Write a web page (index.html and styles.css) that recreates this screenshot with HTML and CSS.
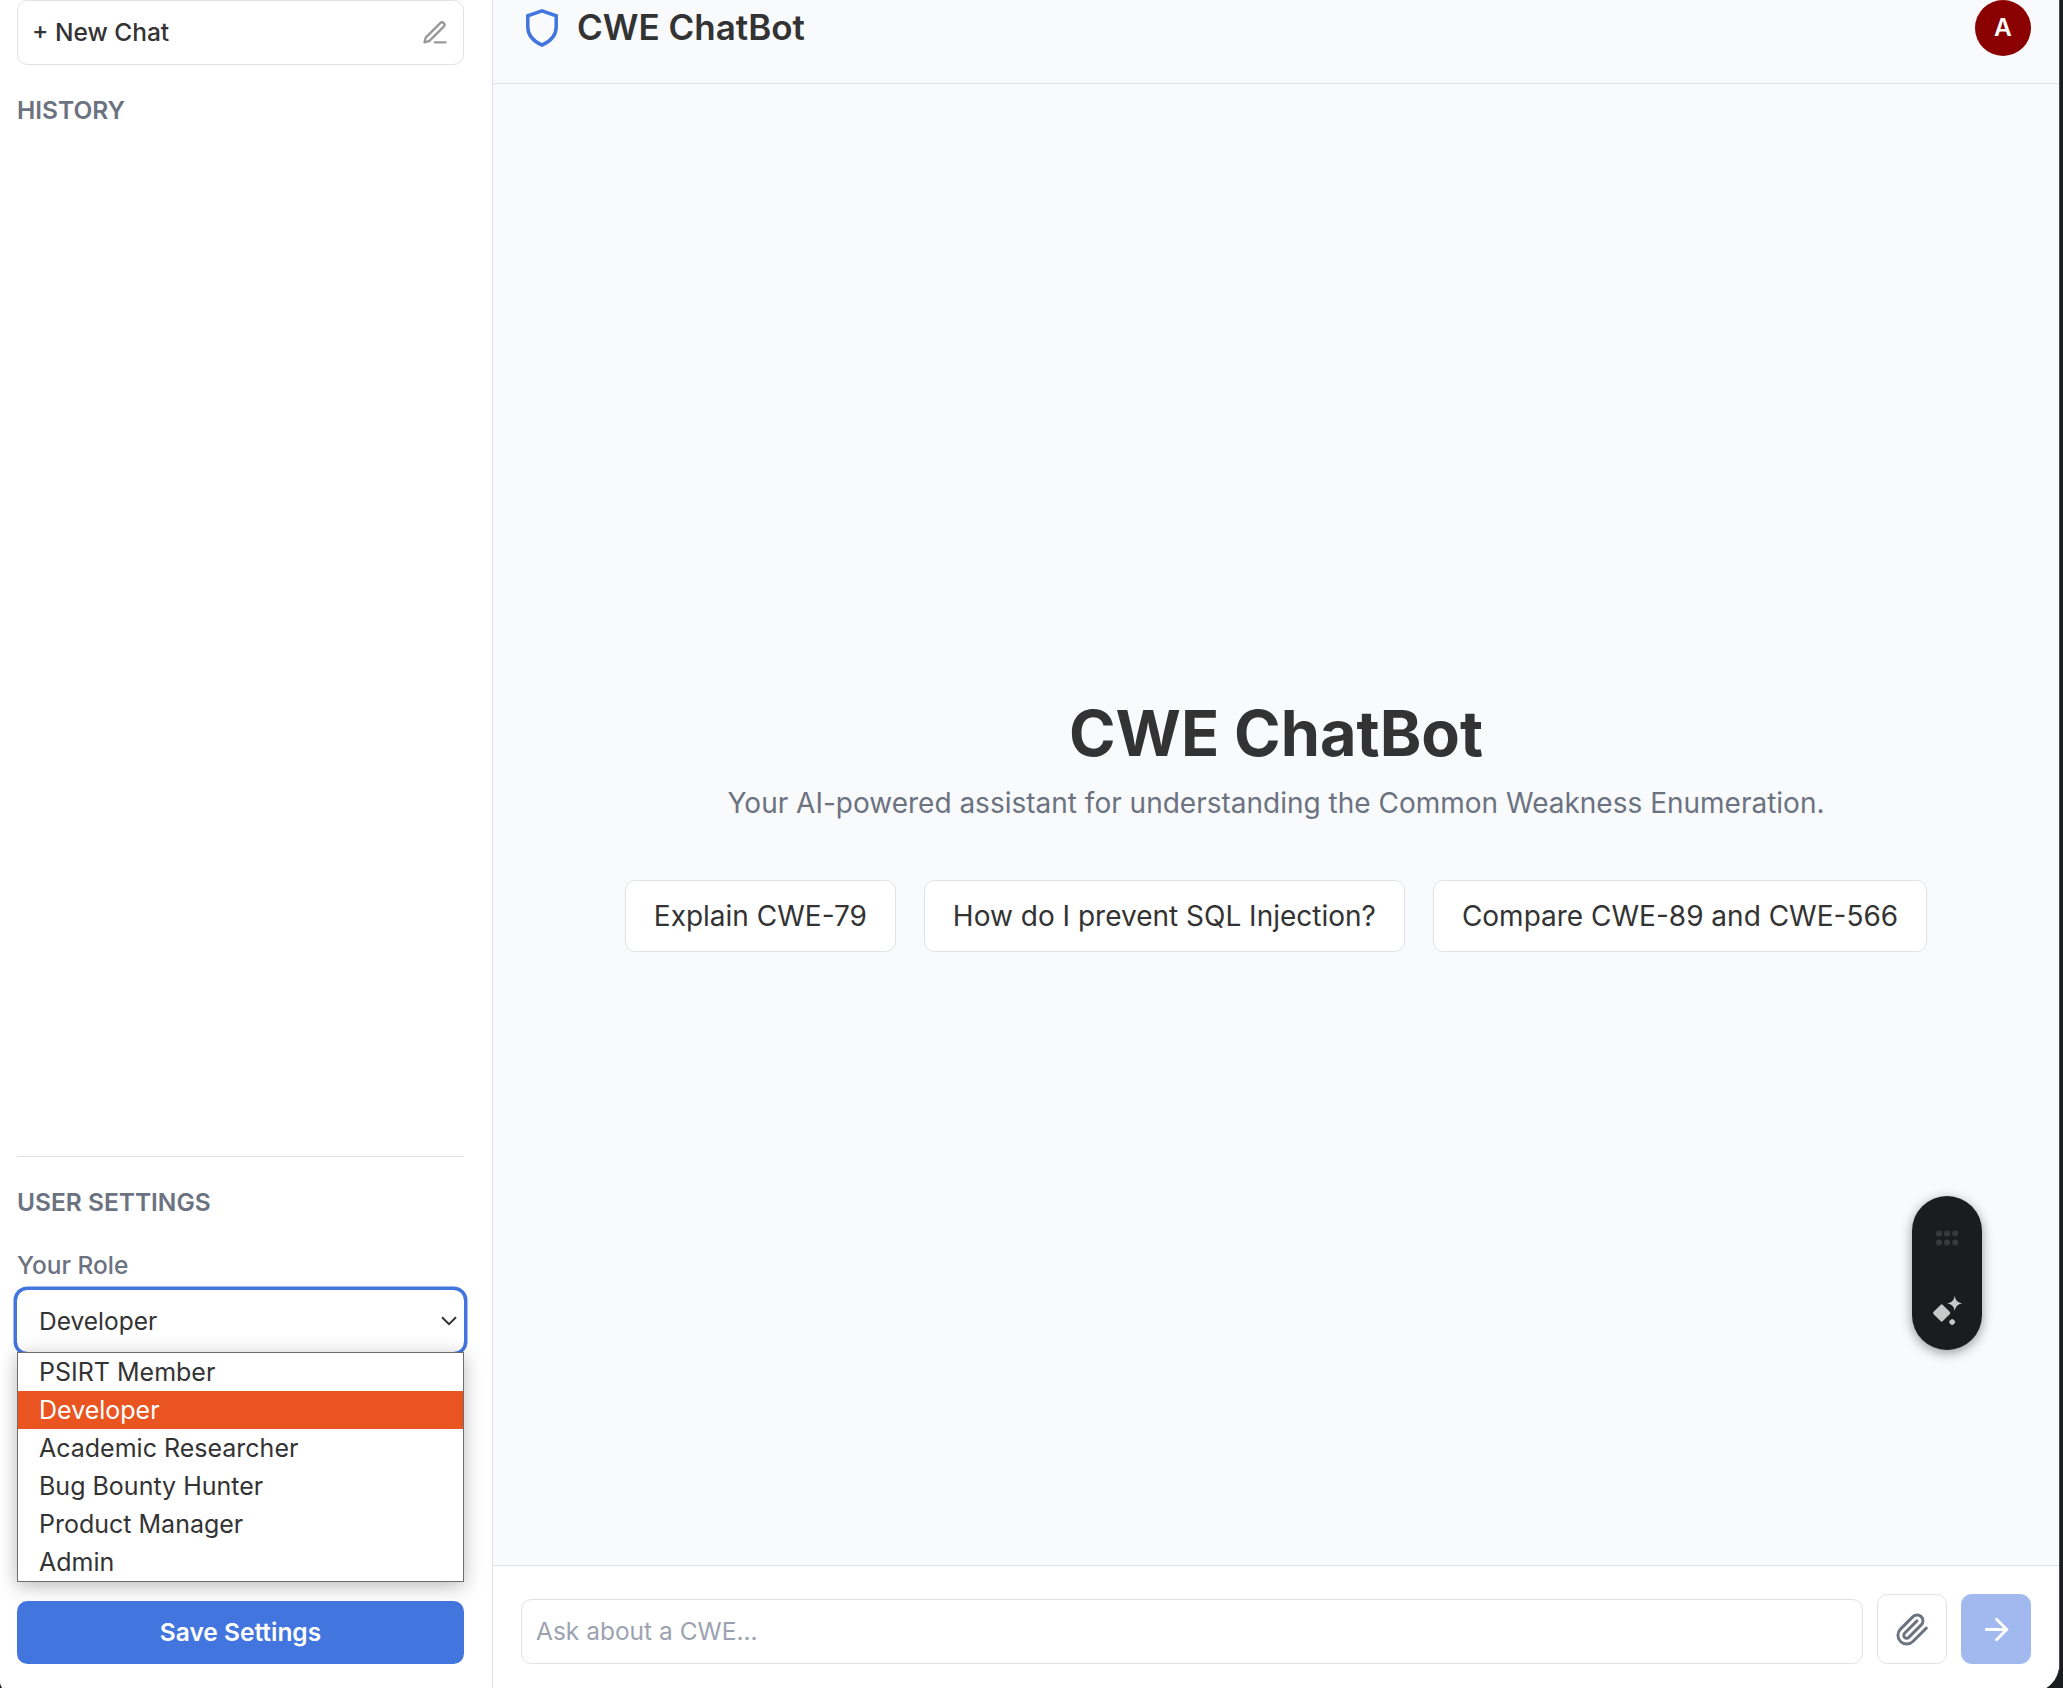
FILE: index.html
```html
<!DOCTYPE html>
<html lang="en">
<head>
<meta charset="utf-8">
<title>CWE ChatBot</title>
<link rel="stylesheet" href="styles.css">
</head>
<body>
<div class="window">
  <aside class="sidebar">
    <button class="new-chat">
      <span>+ New Chat</span>
      <svg class="pencil" viewBox="0 0 24 24" fill="none" stroke="currentColor" stroke-width="2" stroke-linecap="round" stroke-linejoin="round"><path d="M12 20h9"/><path d="M16.5 3.5a2.12 2.12 0 0 1 3 3L7 19l-4 1 1-4Z"/></svg>
    </button>
    <h2 class="label">HISTORY</h2>
    <section class="settings">
      <h2 class="label">USER SETTINGS</h2>
      <div class="field-label">Your Role</div>
      <div class="select">
        <span>Developer</span>
        <svg class="chevron" viewBox="0 0 16 10" fill="none" stroke="currentColor" stroke-width="2"><path d="M1 1.2l7 7 7-7"/></svg>
        <ul class="options">
          <li>PSIRT Member</li>
          <li class="selected">Developer</li>
          <li>Academic Researcher</li>
          <li>Bug Bounty Hunter</li>
          <li>Product Manager</li>
          <li>Admin</li>
        </ul>
      </div>
      <button class="save">Save Settings</button>
    </section>
  </aside>
  <main class="main">
    <header class="header">
      <svg class="shield" viewBox="0 0 32 38" fill="none" stroke="currentColor" stroke-width="3.5"><path d="M16 1.9L30.2 6.8V18C30.2 26 24 32.500 16 36.200C8 32.500 1.800 26 1.800 18V6.800Z"/></svg>
      <span class="brand">CWE ChatBot</span>
      <div class="avatar">A</div>
    </header>
    <section class="hero">
      <h1>CWE ChatBot</h1>
      <p>Your AI-powered assistant for understanding the Common Weakness Enumeration.</p>
      <div class="chips">
        <button>Explain CWE-79</button>
        <button>How do I prevent SQL Injection?</button>
        <button>Compare CWE-89 and CWE-566</button>
      </div>
    </section>
    <footer class="composer">
      <div class="input">Ask about a CWE...</div>
      <button class="square attach">
        <svg viewBox="0 0 24 24" fill="none" stroke="currentColor" stroke-width="2" stroke-linecap="round" stroke-linejoin="round"><path d="m21.440 11.050-9.190 9.190a6 6 0 0 1-8.490-8.490l8.570-8.570A4 4 0 1 1 18 8.840l-8.590 8.570a2 2 0 0 1-2.830-2.830l8.490-8.480"/></svg>
      </button>
      <button class="square send">
        <svg viewBox="0 0 24 24" fill="none" stroke="currentColor" stroke-width="2" stroke-linecap="round" stroke-linejoin="round"><path d="M5 12h14"/><path d="m12 5 7 7-7 7"/></svg>
      </button>
    </footer>
  </main>
  <div class="pill">
    <svg viewBox="0 0 70 154">
      <g fill="#38393a"><circle cx="27" cy="37.500" r="3"/><circle cx="35" cy="37.500" r="3"/><circle cx="43.200" cy="37.500" r="3"/><circle cx="27" cy="46.500" r="3"/><circle cx="35" cy="46.500" r="3"/><circle cx="43.200" cy="46.500" r="3"/></g>
      <g fill="#c7c8c8"><rect x="23.200" y="110.500" width="13" height="13" rx="1.600" transform="rotate(45 29.700 117)"/><path d="M42.700 100Q43.700 106.400 50 107.400Q43.700 108.400 42.700 114.800Q41.700 108.400 35.400 107.400Q41.700 106.400 42.700 100Z"/><path d="M42.700 103.400L46.200 107.400L42.700 111.400L39.200 107.400Z"/><rect x="37.600" y="123.400" width="5.200" height="5.200" rx="1.600" transform="rotate(45 40.200 126)"/></g>
    </svg>
  </div>
</div>
</body>
</html>
```
FILE: styles.css
```css
* { box-sizing: border-box; }
html, body { margin: 0; height: 100%; }
body {
  background: #1a1c1d;
  font-family: Inter, "Liberation Sans", sans-serif;
  font-size: 24.5px;
  color: #333;
  overflow: hidden;
}
button { font: inherit; color: inherit; border: 1px solid #dfe1e6; background: #fff; border-radius: 10.5px; padding: 0; }
h1, h2, p, ul { margin: 0; padding: 0; }
svg { display: block; }

.window {
  position: relative;
  display: flex;
  width: 2060px;
  height: 1692px;
  padding-bottom: 4px;
  border-right: 1px solid #4a4c4d;
  border-radius: 0 0 28px 10px;
  overflow: hidden;
  background: #fff;
}

.sidebar {
  width: 493px;
  flex: none;
  display: flex;
  flex-direction: column;
  padding: 0 28px 24px 17px;
  border-right: 1px solid #dfe1e6;
}
.new-chat {
  height: 65px;
  display: flex;
  align-items: center;
  justify-content: space-between;
  padding: 0 14px;
  font-weight: 500;
}
.new-chat span { padding-bottom: 2px; }
.pencil { width: 28px; height: 28px; color: #999; }
.label { font-size: 24.5px; line-height: 35px; font-weight: 600; color: #6b7280; }
.sidebar > .label { margin-top: 28px; }
.settings { margin-top: auto; border-top: 1px solid #dfe1e6; padding-top: 28px; }
.field-label { margin-top: 28px; line-height: 35px; font-weight: 500; color: #6b7280; }
.select {
  position: relative;
  display: flex;
  align-items: center;
  justify-content: space-between;
  height: 62px;
  margin-top: 7px;
  padding: 0 7px 1px 22px;
  border-radius: 10.5px;
  box-shadow: 0 0 0 3.5px #4275de;
}
.chevron { width: 16px; height: 10px; }
.options {
  position: absolute;
  left: 0;
  right: 0;
  top: 62px;
  border: 1px solid #6d6d6d;
  background: #fff;
  list-style: none;
  font-size: 25px;
  box-shadow: 0 4px 18px rgba(0, 0, 0, .28);
}
.options li { height: 38px; line-height: 38px; padding-left: 21px; }
.options .selected { background: #e95420; color: #fff; }
.save { display: block; width: 100%; height: 63px; margin-top: 249px; padding-bottom: 2px; border: 0; background: #4275de; color: #fff; font-weight: 600; }

.main { flex: 1; display: flex; flex-direction: column; background: #f9fafc; }
.header {
  height: 84px;
  display: flex;
  align-items: flex-start;
  padding: 0 28px 0 33px;
  border-bottom: 1px solid #dfe1e6;
}
.shield { width: 32px; height: 38px; margin-top: 9px; color: #4275de; }
.brand { margin-left: 19px; font-size: 35px; line-height: 54px; font-weight: 600; }
.avatar {
  width: 56px;
  height: 56px;
  margin-left: auto;
  border-radius: 50%;
  background: #8b0000;
  color: #fff;
  font-weight: 600;
  line-height: 54px;
  text-align: center;
}
.hero { flex: 1; display: flex; flex-direction: column; align-items: center; padding-top: 614px; }
.hero h1 { font-size: 63px; line-height: 70px; font-weight: 700; }
.hero p { margin-top: 14px; font-size: 28px; line-height: 42px; color: #6b7280; }
.chips { display: flex; gap: 28px; margin-top: 56px; font-size: 28px; }
.chips button { height: 72px; padding: 0 28px; }

.composer {
  height: 123px;
  flex: none;
  display: flex;
  align-items: flex-end;
  gap: 14px;
  padding: 0 28px 24px;
  border-top: 1px solid #dfe1e6;
  background: #fff;
}
.input { flex: 1; height: 65px; line-height: 63px; padding-left: 14px; border: 1px solid #dfe1e6; border-radius: 10.5px; color: #9ca3af; }
.square { width: 70px; height: 70px; display: grid; place-items: center; }
.square svg { width: 35px; height: 35px; }
.attach { color: #6b7280; }
.send { border-color: #a1b9ef; background: #a1b9ef; color: #fff; }

.pill {
  position: absolute;
  left: 1912px;
  top: 1196px;
  width: 70px;
  height: 154px;
  border-radius: 35px;
  background: #1b1c1d;
  box-shadow: 0 3px 12px rgba(0, 0, 0, .4);
}
```
